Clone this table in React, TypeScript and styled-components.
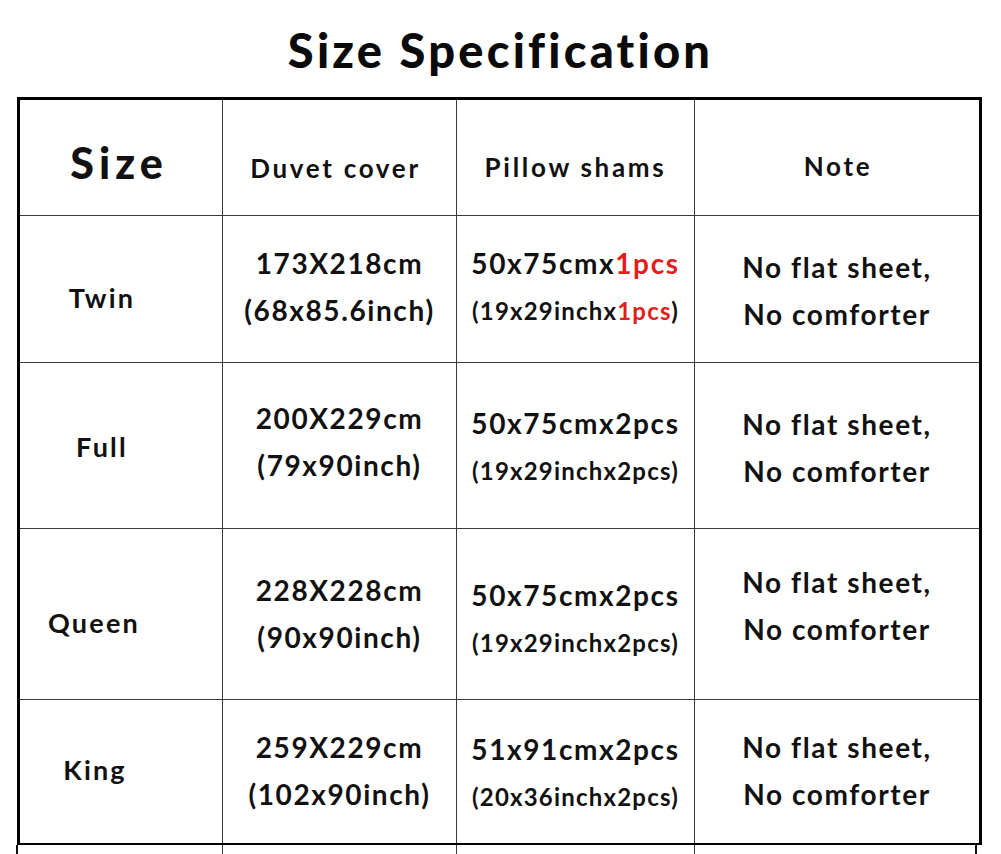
import React from "react";
import styled, { createGlobalStyle } from "styled-components";

const Global = createGlobalStyle`
  html, body { margin: 0; padding: 0; background: #fff; overflow: hidden; }
  body { font-family: Lato, "Open Sans", sans-serif; color: #111; }
`;

const Page = styled.div`
  width: 1001px;
  height: 854px;
  overflow: hidden;
  background: #fff;
`;

const Title = styled.h1`
  margin: 0;
  padding-top: 23px;
  height: 55px;
  line-height: 55px;
  font-size: 47px;
  font-weight: 900;
  text-align: center;
  letter-spacing: 3.2px;
  color: #0a0a0a;
`;

const Table = styled.div`
  margin: 19px 0 0 17px;
  width: 965px;
  box-sizing: border-box;
  border: 3px solid #000;
  border-bottom-width: 2px;
  display: grid;
  grid-template-columns: 203px 234px 238px 284px;
  grid-template-rows: 116px 147px 166px 171px 143px;
`;

const Cell = styled.div<{ $last?: boolean; $bottom?: boolean; $dy?: number; $dx?: number }>`
  box-sizing: border-box;
  border-right: ${(p) => (p.$last ? "none" : "1px solid #3a3a3a")};
  border-bottom: ${(p) => (p.$bottom ? "none" : "1px solid #3a3a3a")};
  display: flex;
  flex-direction: column;
  align-items: center;
  justify-content: center;
  padding-top: ${(p) => Math.max(0, (p.$dy ?? 0) * 2)}px;
  padding-bottom: ${(p) => Math.max(0, -(p.$dy ?? 0) * 2)}px;
  padding-right: ${(p) => Math.max(0, -(p.$dx ?? 0) * 2)}px;
  padding-left: ${(p) => Math.max(0, (p.$dx ?? 0) * 2)}px;
`;

const HeadText = styled.div<{ $big?: boolean }>`
  font-size: ${(p) => (p.$big ? "43px" : "26px")};
  font-weight: ${(p) => (p.$big ? 900 : 700)};
  letter-spacing: ${(p) => (p.$big ? "5px" : "2.7px")};
  line-height: 1;
  white-space: nowrap;
`;

const SizeLabel = styled.div`
  font-size: 27px;
  font-weight: 700;
  letter-spacing: 2.2px;
  line-height: 1;
`;

const Lines = styled.div`
  display: flex;
  flex-direction: column;
  align-items: center;
`;

const Line = styled.div<{ $small?: boolean }>`
  height: 47px;
  line-height: 47px;
  font-size: ${(p) => (p.$small ? "24px" : "28px")};
  font-weight: 700;
  letter-spacing: ${(p) => (p.$small ? "1.2px" : "1.6px")};
  white-space: nowrap;
`;

const Red = styled.span`
  color: #e01e1e;
`;

const Continuation = styled.div`
  margin: 0 0 0 16px;
  width: 961px;
  height: 30px;
  box-sizing: border-box;
  border-left: 2px solid #111;
  border-right: 2px solid #111;
  display: grid;
  grid-template-columns: 205px 234px 238px 1fr;
`;

const ContCell = styled.div<{ $last?: boolean }>`
  border-right: ${(p) => (p.$last ? "none" : "1px solid #3a3a3a")};
`;

type Row = {
  size: string;
  sizeDy: number;
  sizeDx: number;
  duvet: [string, string];
  duvetDy: number;
  pillow: [React.ReactNode, React.ReactNode];
  pillowDy: number;
  noteDy: number;
};

const rows: Row[] = [
  {
    size: "Twin",
    sizeDy: 8,
    sizeDx: -19,
    duvet: ["173X218cm", "(68x85.6inch)"],
    duvetDy: -2,
    pillow: [
      <>50x75cmx<Red>1pcs</Red></>,
      <>(19x29inchx<Red>1pcs</Red>)</>,
    ],
    pillowDy: -2,
    noteDy: 2,
  },
  {
    size: "Full",
    sizeDy: 1,
    sizeDx: -19,
    duvet: ["200X229cm", "(79x90inch)"],
    duvetDy: -4,
    pillow: ["50x75cmx2pcs", "(19x29inchx2pcs)"],
    pillowDy: 1,
    noteDy: 2,
  },
  {
    size: "Queen",
    sizeDy: 8,
    sizeDx: -27,
    duvet: ["228X228cm", "(90x90inch)"],
    duvetDy: 0,
    pillow: ["50x75cmx2pcs", "(19x29inchx2pcs)"],
    pillowDy: 5,
    noteDy: -8,
  },
  {
    size: "King",
    sizeDy: -2,
    sizeDx: -26,
    duvet: ["259X229cm", "(102x90inch)"],
    duvetDy: -1,
    pillow: ["51x91cmx2pcs", "(20x36inchx2pcs)"],
    pillowDy: 1,
    noteDy: -1,
  },
];

export default function App() {
  return (
    <Page>
      <Global />
      <Title>Size Specification</Title>
      <Table>
        <Cell $dy={5} $dx={-2}>
          <HeadText $big>Size</HeadText>
        </Cell>
        <Cell $dy={10} $dx={-4}>
          <HeadText>Duvet cover</HeadText>
        </Cell>
        <Cell $dy={9}>
          <HeadText>Pillow shams</HeadText>
        </Cell>
        <Cell $last $dy={8} $dx={1}>
          <HeadText>Note</HeadText>
        </Cell>
        {rows.map((r, i) => {
          const bottom = i === rows.length - 1;
          return (
            <React.Fragment key={r.size}>
              <Cell $bottom={bottom} $dy={r.sizeDy} $dx={r.sizeDx}>
                <SizeLabel>{r.size}</SizeLabel>
              </Cell>
              <Cell $bottom={bottom} $dy={r.duvetDy}>
                <Lines>
                  <Line>{r.duvet[0]}</Line>
                  <Line>{r.duvet[1]}</Line>
                </Lines>
              </Cell>
              <Cell $bottom={bottom} $dy={r.pillowDy}>
                <Lines>
                  <Line>{r.pillow[0]}</Line>
                  <Line $small>{r.pillow[1]}</Line>
                </Lines>
              </Cell>
              <Cell $bottom={bottom} $last $dy={r.noteDy}>
                <Lines>
                  <Line>No flat sheet,</Line>
                  <Line>No comforter</Line>
                </Lines>
              </Cell>
            </React.Fragment>
          );
        })}
      </Table>
      <Continuation>
        <ContCell />
        <ContCell />
        <ContCell />
        <ContCell $last />
      </Continuation>
    </Page>
  );
}
